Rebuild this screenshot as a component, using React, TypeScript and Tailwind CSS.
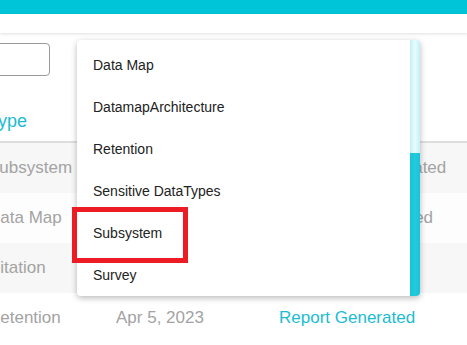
const rows = [
  { type: "Subsystem", date: "", status: "Report Not Generated", done: false, bg: "bg-[#f7f7f7]" },
  { type: "Data Map", date: "", status: "Report Regenerated", done: false, bg: "bg-[#fdfdfd]" },
  { type: "Citation", date: "", status: "", done: false, bg: "bg-[#f7f7f7]" },
  { type: "Retention", date: "Apr 5, 2023", status: "Report Generated", done: true, bg: "bg-white" },
];

const options = [
  "Data Map",
  "DatamapArchitecture",
  "Retention",
  "Sensitive DataTypes",
  "Subsystem",
  "Survey",
];

export default function App() {
  return (
    <div className="relative w-[467px] h-[345px] overflow-hidden bg-white font-['Liberation_Sans',Arial,sans-serif]">
      <div className="h-[14px] bg-[#00c4d7]" />
      <div className="h-[19px] bg-white shadow-[0_1px_3px_rgba(0,0,0,0.13)]" />

      <div className="h-[110px] pt-[10px] border-b-2 border-[#dedede]">
        <div className="-ml-[70px] w-[120px] h-[33px] rounded-[4px] border border-[#9a9a9a]" />
        <p className="-ml-[12px] mt-[33px] text-[18px] leading-6 text-[#1bbcd3]">Type</p>
      </div>

      <div className="flex flex-col">
        {rows.map((r) => (
          <div key={r.type} className={`flex items-center h-[50px] text-[17px] text-[#a3a3a3] ${r.bg}`}>
            <span className="-ml-[12px] w-[128px] whitespace-nowrap">{r.type}</span>
            <span className="w-[163px] whitespace-nowrap">{r.date}</span>
            <span className={`whitespace-nowrap ${r.done ? "text-[#1bbcd3]" : ""}`}>{r.status}</span>
          </div>
        ))}
      </div>

      <div className="absolute left-[77px] top-[40px] w-[343px] h-[256px] flex bg-white rounded-[4px] overflow-hidden shadow-[0_2px_6px_rgba(0,0,0,0.28)]">
        <ul className="flex-1 pt-[4px]">
          {options.map((o) => (
            <li key={o} className="h-[42px] flex items-center pl-4 text-[14px] text-[#222]">
              {o}
            </li>
          ))}
        </ul>
        <div className="w-[10px] flex flex-col">
          <div className="h-[113px] bg-gradient-to-r from-[#c2f0f6] via-[#eafcfd] to-[#c2f0f6]" />
          <div className="flex-1 bg-gradient-to-r from-[#19c3d7] via-[#22cade] to-[#19c3d7]" />
        </div>
      </div>

      <div className="absolute left-[72px] top-[207px] w-[116px] h-[56px] border-[5px] border-[#ed1c24]" />
    </div>
  );
}
